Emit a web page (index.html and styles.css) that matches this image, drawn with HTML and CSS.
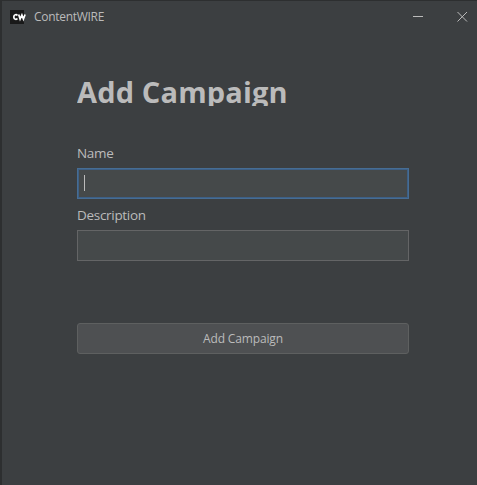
FILE: index.html
```html
<!DOCTYPE html>
<html lang="en">
<head>
<meta charset="utf-8">
<title>ContentWIRE</title>
<link rel="stylesheet" href="styles.css">
</head>
<body>
<div class="window">
  <header class="titlebar">
    <span class="logo"><svg width="16" height="14" viewBox="0 0 16 14"><path d="M7.4 5.4C6.6 4.3 3.8 4.3 3.8 7S6.6 9.7 7.4 8.6M8.7 4.5L10.1 9L11.9 5L13.4 9L15.1 4.5"/></svg></span>
    <span class="app-name">ContentWIRE</span>
    <svg class="controls" width="56" height="12" viewBox="0 0 56 12"><path d="M0 5.5H10"/><path d="M44.5 1L54 10.5M54 1L44.5 10.5"/></svg>
  </header>
  <main class="form">
    <h1 class="heading"><span class="heading-text">Add Campaign</span></h1>
    <label class="label" for="name">Name</label>
    <div class="field focused" id="name"><span class="caret"></span></div>
    <label class="label second" for="description">Description</label>
    <div class="field" id="description"></div>
    <button class="submit"><span>Add Campaign</span></button>
  </main>
</div>
</body>
</html>
```
FILE: styles.css
```css
* { box-sizing: border-box; }
body {
  margin: 0;
  height: 485px;
  overflow: hidden;
  background: #3c3f41;
  color: #bbb;
  font-family: "Open Sans", "Noto Sans", sans-serif;
}
.window {
  height: 485px;
  border-left: 2px solid #2d2f30;
  border-top: 1px solid #2d2f30;
}
.titlebar {
  height: 31px;
  display: flex;
  align-items: center;
  padding: 0 8px;
}
.logo { width: 16px; height: 14px; background: linear-gradient(to right, #191919 14px, transparent 14px); }
.logo svg { display: block; fill: none; stroke: #fff; stroke-width: 1.7; }
.app-name {
  margin-left: 8px;
  font-size: 12px;
  line-height: 16px;
  letter-spacing: -0.3px;
}
.controls { margin-left: auto; fill: none; stroke: #bbb; stroke-width: 1; }
.form {
  width: 332px;
  margin-left: 75px;
  padding-top: 42px;
  display: flex;
  flex-direction: column;
}
.heading {
  margin: 0 0 38px;
  height: 32px;
  overflow: hidden;
  font-size: 29px;
  line-height: 36px;
  font-weight: 700;
  letter-spacing: 0.15px;
  white-space: nowrap;
}
.label {
  height: 20px;
  font-size: 13.5px;
  line-height: 18px;
  letter-spacing: -0.3px;
  margin-bottom: 4px;
}
.second { margin-top: 7px; }
.field {
  height: 31px;
  border: 1px solid #646566;
  background: #45494a;
  padding: 6px;
}
.focused {
  border-color: #466d94;
  box-shadow: inset 0 0 0 1px #3d5f85;
}
.caret { display: block; width: 1px; height: 16px; background: #bbb; }
.submit {
  margin-top: 62px;
  height: 31px;
  padding: 0;
  border: 1px solid #5e6060;
  border-radius: 3px;
  background: #4e5052;
  color: #bbb;
  font: 12px/18px "Open Sans", "Noto Sans", sans-serif;
  letter-spacing: -0.15px;
}
```
